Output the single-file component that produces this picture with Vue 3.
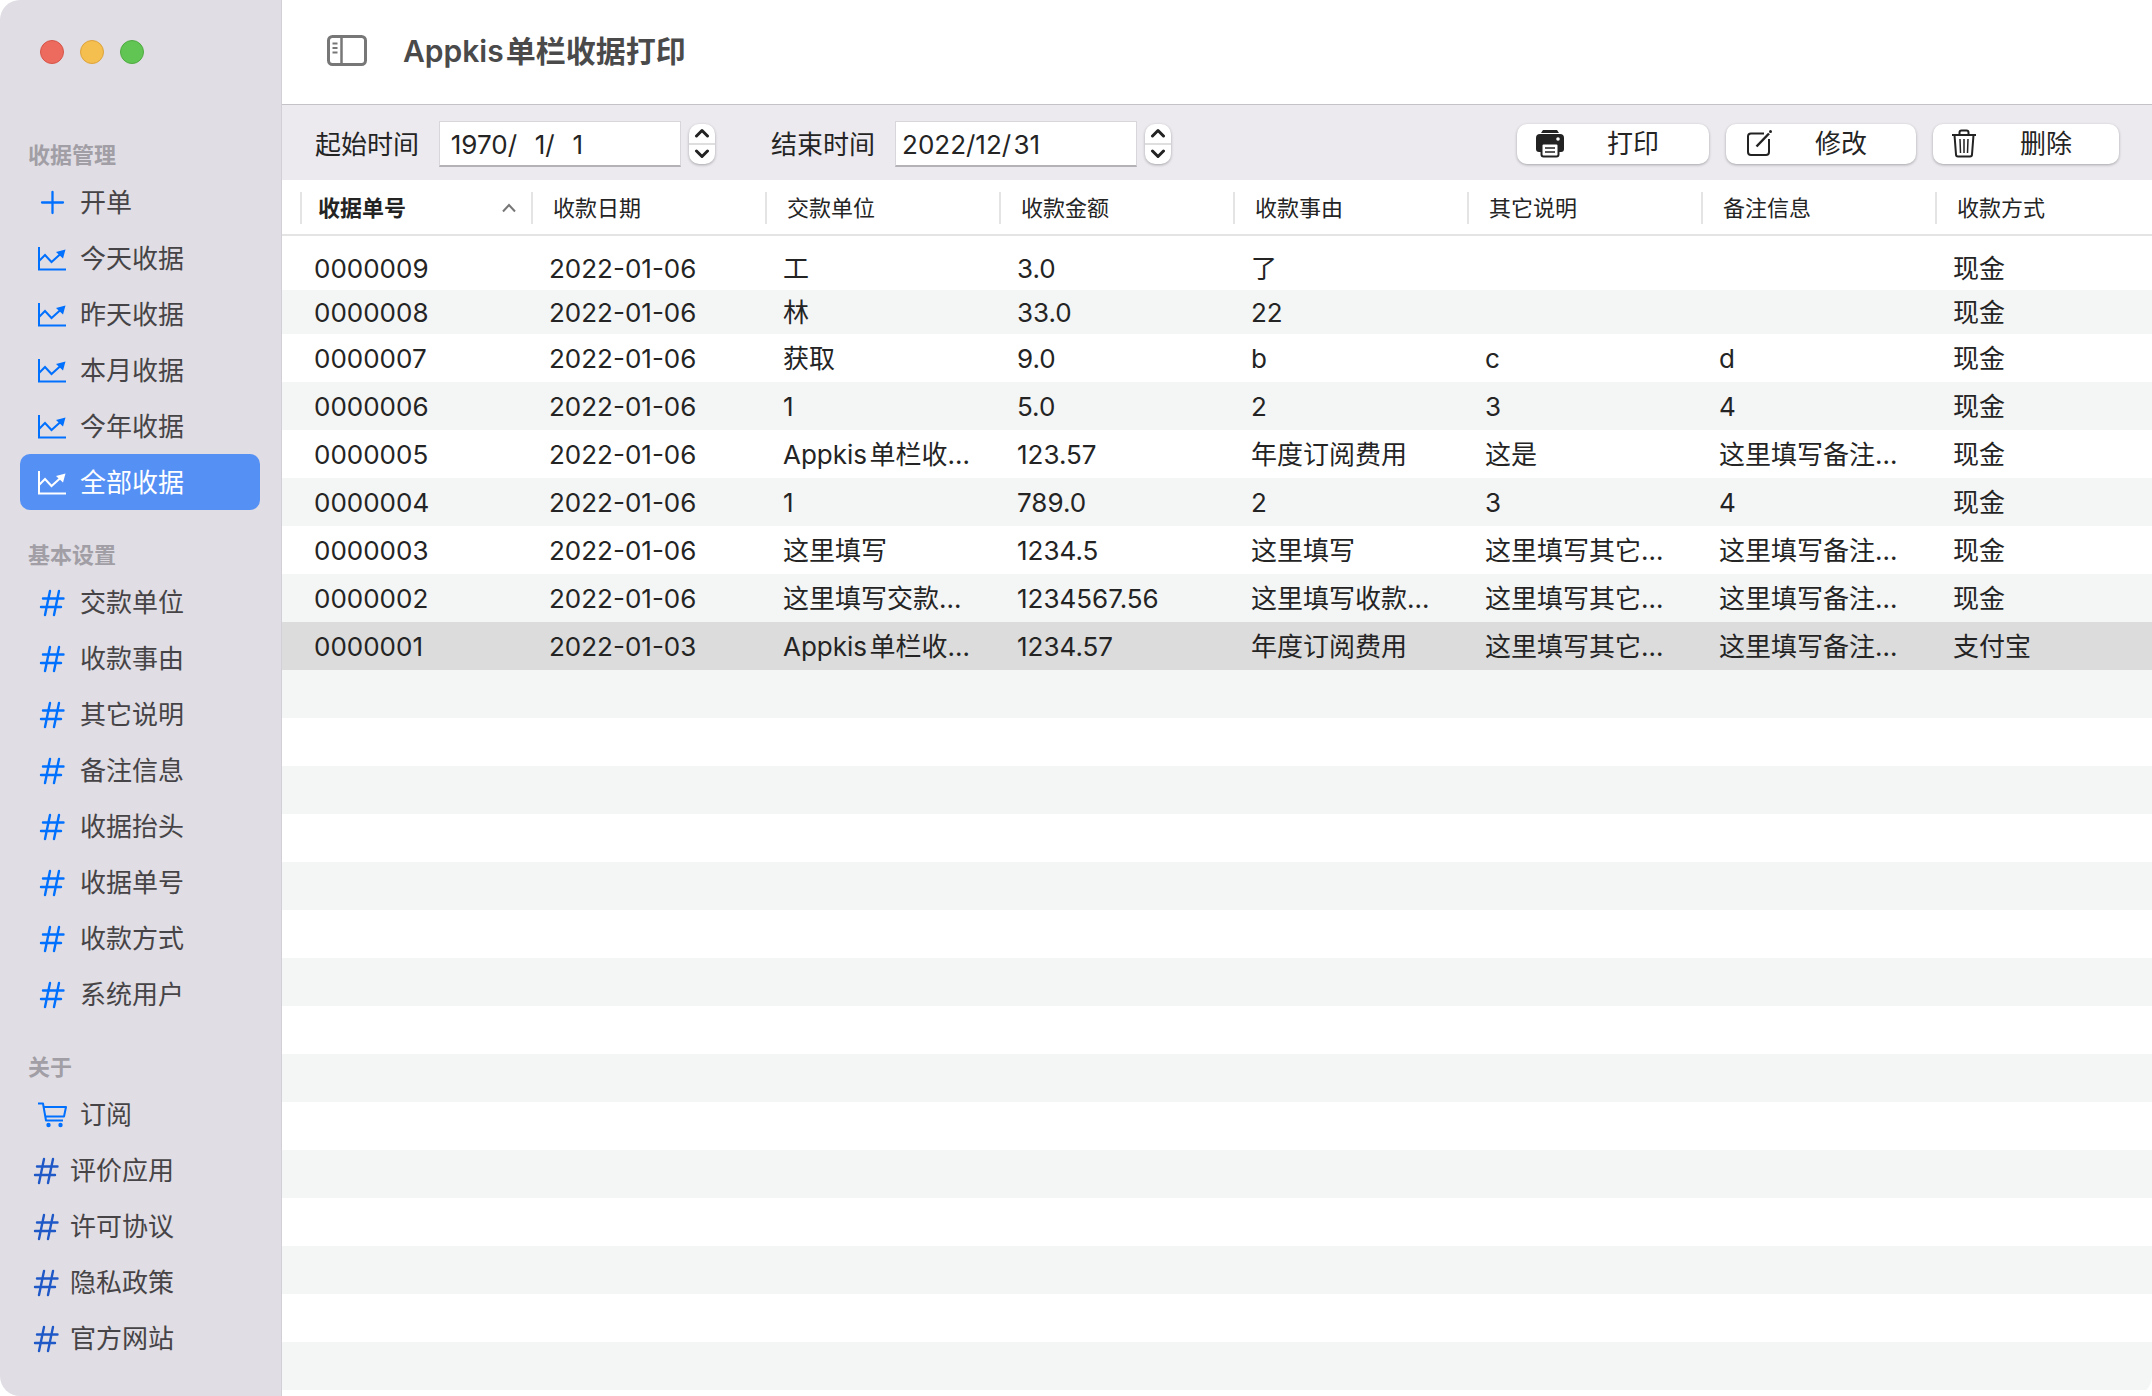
<script setup>
import { ref } from 'vue'

const sections = [
  {
    title: '收据管理',
    items: [
      { label: '开单', icon: 'plus' },
      { label: '今天收据', icon: 'chart' },
      { label: '昨天收据', icon: 'chart' },
      { label: '本月收据', icon: 'chart' },
      { label: '今年收据', icon: 'chart' },
      { label: '全部收据', icon: 'chart', active: true },
    ],
  },
  {
    title: '基本设置',
    items: ['交款单位', '收款事由', '其它说明', '备注信息', '收据抬头', '收据单号', '收款方式', '系统用户'].map(
      (label) => ({ label, icon: 'hash' }),
    ),
  },
  {
    title: '关于',
    items: [
      { label: '订阅', icon: 'cart' },
      { label: '评价应用', icon: 'hash', external: true },
      { label: '许可协议', icon: 'hash', external: true },
      { label: '隐私政策', icon: 'hash', external: true },
      { label: '官方网站', icon: 'hash', external: true },
    ],
  },
]

const dates = ref([
  { id: 'date-from', label: '起始时间', value: '\u20091970/\u2002\u20091/\u2002\u20091' },
  { id: 'date-to', label: '结束时间', value: '2022/12/\u200a31' },
])

const columns = ['收据单号', '收款日期', '交款单位', '收款金额', '收款事由', '其它说明', '备注信息', '收款方式']

const rows = [
  ['0000009', '2022-01-06', '工', '3.0', '了', '', '', '现金'],
  ['0000008', '2022-01-06', '林', '33.0', '22', '', '', '现金'],
  ['0000007', '2022-01-06', '获取', '9.0', 'b', 'c', 'd', '现金'],
  ['0000006', '2022-01-06', '1', '5.0', '2', '3', '4', '现金'],
  ['0000005', '2022-01-06', 'Appkis\u200a单栏收…', '123.57', '年度订阅费用', '这是', '这里填写备注…', '现金'],
  ['0000004', '2022-01-06', '1', '789.0', '2', '3', '4', '现金'],
  ['0000003', '2022-01-06', '这里填写', '1234.5', '这里填写', '这里填写其它…', '这里填写备注…', '现金'],
  ['0000002', '2022-01-06', '这里填写交款…', '1234567.56', '这里填写收款…', '这里填写其它…', '这里填写备注…', '现金'],
  ['0000001', '2022-01-03', 'Appkis\u200a单栏收…', '1234.57', '年度订阅费用', '这里填写其它…', '这里填写备注…', '支付宝'],
]
const selected = '0000001'
</script>

<template>
  <div class="window">
    <aside class="sidebar">
      <div class="lights">
        <button class="light close" aria-label="关闭"></button>
        <button class="light minimize" aria-label="最小化"></button>
        <button class="light zoom" aria-label="缩放"></button>
      </div>
      <nav>
        <section v-for="s in sections" :key="s.title" class="group">
          <h2>{{ s.title }}</h2>
          <a
            v-for="item in s.items"
            :key="item.label"
            href="#"
            class="item"
            :class="{ active: item.active, external: item.external }"
          >
            <svg class="icon" viewBox="0 0 32 32" fill="none" stroke="currentColor" stroke-width="2">
              <path v-if="item.icon === 'plus'" d="M16.500 5v21M6 15.500h21" stroke-width="2.300" stroke-linecap="round" />
              <template v-else-if="item.icon === 'chart'">
                <path d="M3 4v22.500h27M3 18l6-6 6.500 7L25 10.500" />
                <path d="M29.500 6.500l-9.500 2.500 7 6.500z" fill="currentColor" stroke="none" />
              </template>
              <path
                v-else-if="item.icon === 'hash'"
                d="M14 4l-5 24M23 4l-5 24M7 11.500h20.500M5 20h20"
                stroke-width="2.400"
                stroke-linecap="round"
              />
              <template v-else>
                <path d="M2 4.500h5l3 17h17M8 8h22l-2 9.500H9.500" stroke-linejoin="round" />
                <circle cx="12.500" cy="26" r="2.200" fill="currentColor" stroke="none" />
                <circle cx="24.500" cy="26" r="2.200" fill="currentColor" stroke="none" />
              </template>
            </svg>
            <span>{{ item.label }}</span>
          </a>
        </section>
      </nav>
    </aside>

    <main class="main">
      <header class="titlebar">
        <button class="toggle" aria-label="切换边栏">
          <svg width="40" height="32" viewBox="0 0 40 32" fill="none" stroke="currentColor" stroke-width="2">
            <rect x="1.500" y="1.500" width="37" height="28" rx="4" stroke-width="3" />
            <path d="M14.500 2v28" stroke-width="2.500" />
            <path d="M5.500 8.500h5M5.500 13h5M5.500 17.500h5" />
          </svg>
        </button>
        <h1>Appkis<span>单栏收据打印</span></h1>
      </header>

      <div class="toolbar">
        <div v-for="d in dates" :key="d.id" class="field">
          <label :for="d.id">{{ d.label }}</label>
          <input :id="d.id" v-model="d.value" type="text" />
          <span class="stepper">
            <button aria-label="增加">
              <svg width="16" height="10" viewBox="0 0 16 10"><path d="M2.500 8L8 2.500 13.500 8" /></svg>
            </button>
            <button aria-label="减少">
              <svg width="16" height="10" viewBox="0 0 16 10"><path d="M2.500 2L8 7.500 13.500 2" /></svg>
            </button>
          </span>
        </div>
        <div class="actions">
          <button class="action print">
            <svg width="30" height="30" viewBox="0 0 30 30">
              <path d="M8 1h14l2 3H6z" fill="#222" />
              <path d="M5 5h20a4 4 0 0 1 4 4v11a3 3 0 0 1-3 3H4a3 3 0 0 1-3-3V9a4 4 0 0 1 4-4z" fill="#222" />
              <rect x="6.500" y="14.500" width="17" height="13" rx="2" fill="#fff" stroke="#222" stroke-width="2" />
              <path d="M10 19h10M10 23h10" stroke="#222" stroke-width="1.500" />
              <circle cx="23" cy="10" r="1.800" fill="#fff" />
            </svg>
            <span>打印</span>
          </button>
          <button class="action edit">
            <svg width="30" height="30" viewBox="0 0 30 30" fill="none" stroke="#222" stroke-width="2">
              <path d="M20 4.500H7a3 3 0 0 0-3 3V23a3 3 0 0 0 3 3h15a3 3 0 0 0 3-3V10" />
              <path d="M12.500 17.500L25 4.500" stroke-width="2.500" />
              <circle cx="26.500" cy="2.500" r="1.500" fill="#222" stroke="none" />
            </svg>
            <span>修改</span>
          </button>
          <button class="action delete">
            <svg width="30" height="30" viewBox="0 0 30 30" fill="none" stroke="#222" stroke-width="2">
              <path
                d="M1 6h24M8.500 6V3.500a2 2 0 0 1 2-2h5a2 2 0 0 1 2 2V6M3.500 6L5 25.500a2 2 0 0 0 2 2h12a2 2 0 0 0 2-2L22.500 6"
              />
              <path d="M9 10l.5 14M13 10v14M17 10l-.5 14" stroke-width="1.500" />
            </svg>
            <span>删除</span>
          </button>
        </div>
      </div>

      <table class="receipts">
        <thead>
          <tr>
            <th v-for="(c, i) in columns" :key="c" scope="col">
              <div class="head" :class="{ sorted: i === 0 }">
                <span>{{ c }}</span>
                <svg v-if="i === 0" width="16" height="10" viewBox="0 0 16 10">
                  <path d="M2 8.500l6-6.500 6 6.500" fill="none" stroke="#777" stroke-width="2" />
                </svg>
              </div>
            </th>
          </tr>
        </thead>
        <tbody>
          <tr v-for="r in rows" :key="r[0]" :class="{ selected: r[0] === selected }">
            <td v-for="(cell, i) in r" :key="i">{{ cell }}</td>
          </tr>
        </tbody>
      </table>
      <div class="stripes"></div>
    </main>
  </div>
</template>

<style>
body {
  margin: 0;
  background: #fff;
}
</style>

<style scoped>
.window {
  display: flex;
  min-height: 100vh;
  overflow: hidden;
  border-radius: 20px;
  background: #fff;
  color: #242424;
  font: 26px/32px Inter, 'Noto Sans CJK SC', sans-serif;
}
.window * {
  box-sizing: border-box;
}
button {
  padding: 0;
  border: 0;
  background: none;
  color: inherit;
  font: inherit;
}
.sidebar {
  flex: none;
  width: 282px;
  padding: 40px 21px 0 20px;
  border-right: 1px solid #d2cfd6;
  background: #e0dde4;
}
.lights {
  display: flex;
  gap: 16px;
  height: 24px;
  margin: 0 20px 70px;
}
.light {
  width: 24px;
  height: 24px;
  border: 1px solid #d65549;
  border-radius: 50%;
  background: #ec6a5e;
}
.minimize {
  border-color: #dda33c;
  background: #f4bf4f;
}
.zoom {
  border-color: #50ab41;
  background: #61c554;
}
.group {
  margin-bottom: 24px;
}
.group h2 {
  height: 40px;
  margin: 0 8px;
  color: #a19ea5;
  font-size: 22px;
  font-weight: 700;
  line-height: 42px;
}
.item {
  display: flex;
  align-items: center;
  gap: 12px;
  height: 56px;
  padding: 2px 0 0 16px;
  border-radius: 10px;
  color: #464446;
  text-decoration: none;
}
.item.active {
  background: #5590f5;
  color: #fff;
}
.icon {
  width: 32px;
  height: 32px;
  color: #0070ff;
}
.active .icon {
  color: #fff;
}
.external {
  gap: 8px;
  padding-left: 10px;
}
.external .icon {
  color: #1f58c7;
}
.main {
  display: flex;
  flex: 1;
  flex-direction: column;
  min-width: 0;
  padding-bottom: 6px;
}
.titlebar {
  display: flex;
  align-items: center;
  gap: 36px;
  height: 105px;
  padding: 0 45px 2px;
  border-bottom: 1px solid #c4c2c7;
}
.toggle {
  display: flex;
  color: #777;
}
h1 {
  margin: 0;
  color: #4a4a4a;
  font-size: 30px;
  font-weight: 600;
  line-height: 40px;
}
h1 span {
  margin-left: 2px;
  font-weight: 700;
}
.toolbar {
  display: flex;
  align-items: center;
  height: 75px;
  padding: 2px 33px 0;
  background: #eceaef;
}
.field {
  display: flex;
  align-items: center;
  margin-right: 56px;
}
.field label {
  padding-top: 2px;
}
.field input {
  width: 242px;
  height: 46px;
  margin: 0 8px 0 20px;
  padding: 2px 6px 0;
  border: 1px solid #d8d6da;
  border-bottom: 2px solid #b4b2b6;
  background: #fff;
  color: inherit;
  font: inherit;
}
.stepper {
  display: flex;
  flex-direction: column;
  width: 26px;
  height: 40px;
  border-radius: 10px;
  background: #fff;
  box-shadow: 0 1px 3px #0000004d;
}
.stepper button {
  display: flex;
  flex: 1;
  align-items: center;
  justify-content: center;
}
.stepper button + button {
  border-top: 2px solid #dedede;
}
.stepper path {
  fill: none;
  stroke: #222;
  stroke-width: 3;
  stroke-linecap: round;
  stroke-linejoin: round;
}
.actions {
  display: flex;
  gap: 17px;
  margin-left: auto;
}
.action {
  display: flex;
  align-items: center;
  height: 40px;
  padding: 0 8px 0 18px;
  border-radius: 10px;
  background: #fff;
  box-shadow: 0 1px 3px #0000004d;
}
.print {
  width: 192px;
}
.edit {
  width: 190px;
}
.delete {
  width: 186px;
}
.action span {
  flex: 1;
  text-align: center;
}
.receipts {
  width: 100%;
  border-spacing: 0;
  table-layout: fixed;
}
.receipts th {
  width: 234px;
  height: 56px;
  padding: 2px 0 0;
  border-bottom: 2px solid #e4e4e4;
  font-size: 22px;
  font-weight: 400;
  text-align: left;
}
.receipts th:first-child {
  width: 249px;
  padding-left: 18px;
}
.receipts th:last-child {
  width: auto;
}
.head {
  display: flex;
  align-items: center;
  justify-content: space-between;
  height: 32px;
  padding: 0 14px 0 20px;
  border-left: 2px solid #e4e4e4;
}
.head.sorted {
  padding-left: 16px;
  font-weight: 700;
}
.receipts td {
  height: 48px;
  padding: 2px 16px 0 18px;
  white-space: nowrap;
}
.receipts td:first-child {
  padding-left: 32px;
}
.receipts tbody tr:nth-child(-n + 2) td {
  height: 44px;
}
.receipts tbody::before {
  content: '';
  display: block;
  height: 10px;
}
.receipts tbody tr:nth-child(even) {
  background: #f4f5f5;
}
.receipts tbody tr.selected {
  background: #dcdcdc;
}
.stripes {
  flex: 1;
  background: repeating-linear-gradient(#f4f5f5 0 48px, #fff 48px 96px);
}
</style>
